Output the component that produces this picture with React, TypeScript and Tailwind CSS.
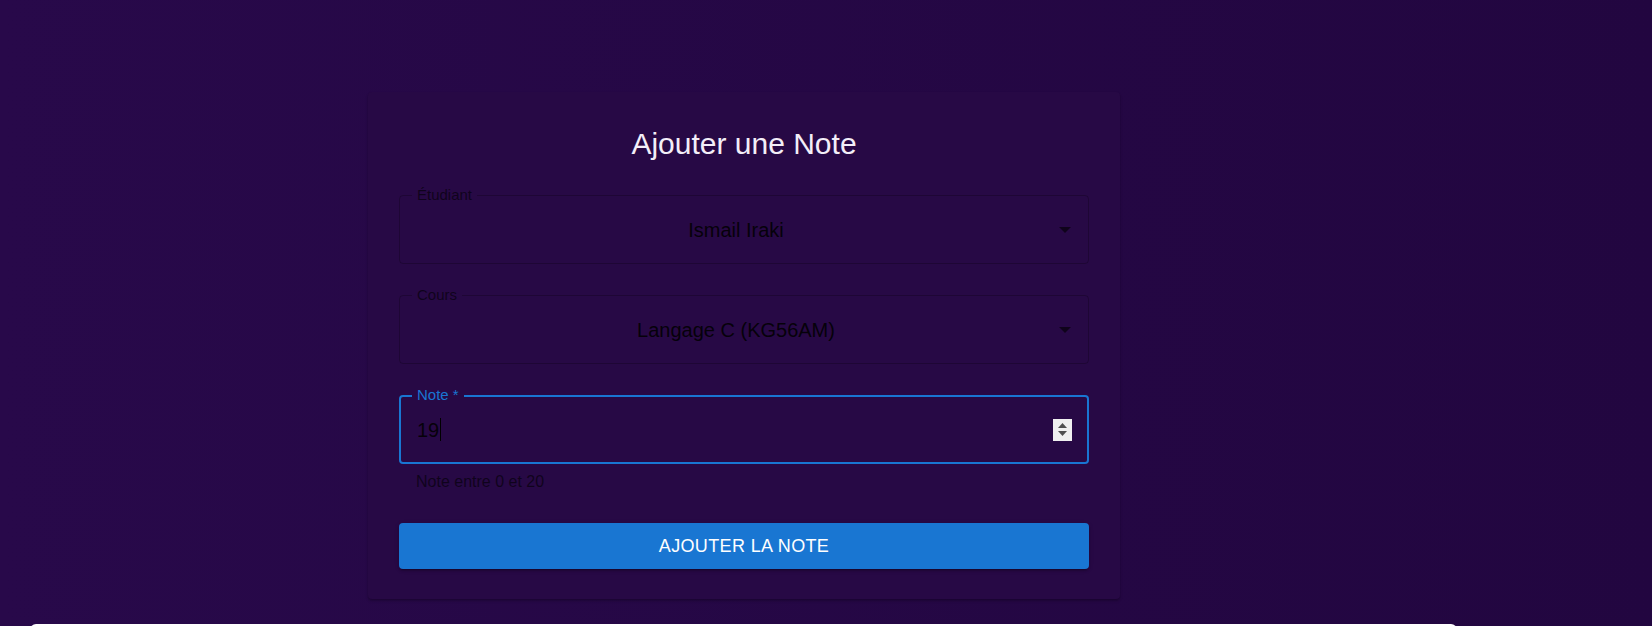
import React from "react";

function Arrow() {
  return (
    <svg className="absolute right-[17px] top-1/2 -translate-y-1/2" width="12" height="6" viewBox="0 0 12 6">
      <path d="M0 0 L12 0 L6 6 Z" fill="rgba(0,0,0,0.6)" />
    </svg>
  );
}

function SelectField({ label, value }: { label: string; value: string }) {
  return (
    <div className="relative h-[69px] w-[690px] rounded-[4px] border border-[rgba(0,0,0,0.23)]">
      <span className="absolute left-[12px] top-[-11px] bg-[#270945] px-[5px] text-[15px] leading-[20px] text-[rgba(0,0,0,0.6)]">
        {label}
      </span>
      <div className="flex h-full items-center justify-center pl-[14px] pr-[30px] text-[20px] text-[rgba(0,0,0,0.87)]">
        {value}
      </div>
      <Arrow />
    </div>
  );
}

export default function App() {
  return (
    <div
      className="h-[626px] w-full overflow-hidden bg-gradient-to-r from-[#28094a] to-[#220640] pt-[92px]"
      style={{ fontFamily: '"Liberation Sans", Arial, sans-serif' }}
    >
      <div className="ml-[368px] w-[752px] rounded-[4px] bg-[#270945] px-[31px] pb-[30px] pt-[32px] shadow-[0_2px_3px_rgba(0,0,0,0.22),0_1px_1px_rgba(0,0,0,0.08)]">
        <h1 className="text-center text-[30px] leading-[40px] text-[#f3eef8]">Ajouter une Note</h1>
        <div className="mt-[31px] flex flex-col gap-[31px]">
          <SelectField label="Étudiant" value="Ismail Iraki" />
          <SelectField label="Cours" value="Langage C (KG56AM)" />
          <div>
            <div className="relative h-[69px] w-[690px] rounded-[4px] border-2 border-[#1976d2]">
              <span className="absolute left-[11px] top-[-12px] bg-[#270945] px-[5px] text-[15px] leading-[20px] text-[#1976d2]">
                Note *
              </span>
              <div className="flex h-full items-center pl-[16px] text-[20px] text-[rgba(0,0,0,0.87)]">
                <span>19</span>
                <span className="ml-[1px] inline-block h-[23px] w-[1px] bg-black" />
              </div>
              <div className="absolute right-[15px] top-1/2 flex h-[22px] w-[19px] -translate-y-1/2 flex-col items-center justify-center gap-[3px] bg-[#f0f0f0]">
                <svg width="9" height="5" viewBox="0 0 9 5"><path d="M0 5 L4.5 0 L9 5 Z" fill="#505050" /></svg>
                <svg width="9" height="5" viewBox="0 0 9 5"><path d="M0 0 L9 0 L4.5 5 Z" fill="#505050" /></svg>
              </div>
            </div>
            <div className="mt-[7px] pl-[17px] text-[16px] leading-[22px] text-[rgba(0,0,0,0.6)]">Note entre 0 et 20</div>
          </div>
        </div>
        <button className="mt-[30px] flex h-[46px] w-[690px] items-center justify-center rounded-[4px] bg-[#1976d2] text-[18px] uppercase tracking-[0.02em] text-white shadow-[0_3px_1px_-2px_rgba(0,0,0,0.2),0_2px_2px_rgba(0,0,0,0.14),0_1px_5px_rgba(0,0,0,0.12)]">
          Ajouter la note
        </button>
      </div>
      <div className="ml-[30px] mt-[25px] h-[40px] w-[1427px] rounded-t-[6px] bg-white" />
    </div>
  );
}
